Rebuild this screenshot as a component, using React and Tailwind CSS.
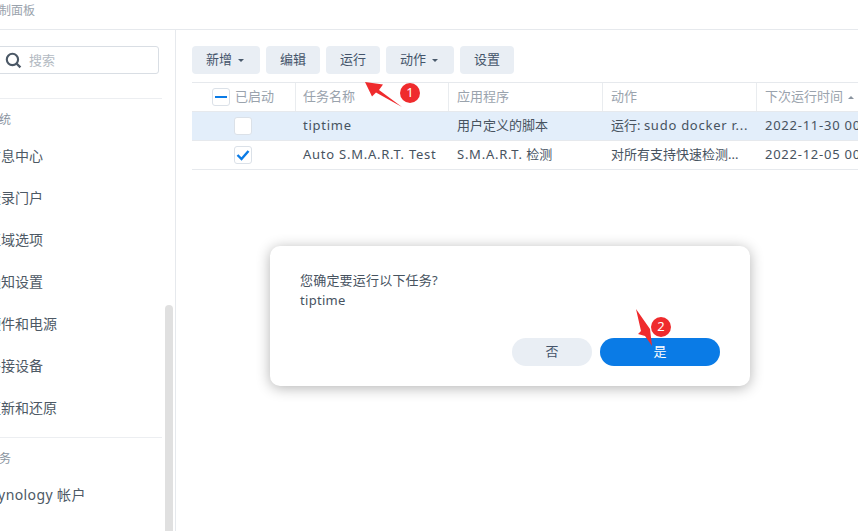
import React from "react";

function Caret() {
  return <span className="ml-[6px] inline-block h-0 w-0 border-x-[3px] border-t-[3px] border-x-transparent border-t-[#4a5a6c]" />;
}

function Btn({ w, label, caret }) {
  return (
    <div className={`${w} flex h-[28px] items-center justify-center rounded-[4px] bg-[#e9eef4] text-[13px] text-[#44546a] ${caret ? "pr-[2px]" : ""}`}>
      {label}
      {caret && <Caret />}
    </div>
  );
}

function Box({ checked, minus }) {
  return (
    <div className="flex h-[18px] w-[18px] items-center justify-center rounded-[3px] border border-[#dbe1e8] bg-white">
      {checked && (
        <svg width="14" height="12" viewBox="0 0 14 12">
          <path d="M1.5 6 L5.5 10 L12.5 2" fill="none" stroke="#0a7be6" strokeWidth="2.4" />
        </svg>
      )}
      {minus && <div className="h-[2px] w-[12px] bg-[#0a7be6]" />}
    </div>
  );
}

const NAV = ["信息中心", "登录门户", "区域选项", "通知设置", "硬件和电源", "外接设备", "更新和还原"];

function Sidebar() {
  return (
    <aside className="relative w-[176px] shrink-0 overflow-hidden border-r border-[#e6e9ed]">
      <div className="ml-[-13px] w-[176px]">
        <div className="mt-[16px] ml-[-13px] flex h-[28px] w-[185px] items-center rounded-[3px] border border-[#d9dee4] pl-[30px]">
          <svg width="17" height="17" viewBox="0 0 16 16" className="shrink-0">
            <circle cx="7" cy="7" r="5.3" fill="none" stroke="#4b5866" strokeWidth="2" />
            <path d="M10.8 10.8 L14.5 14.5" stroke="#4b5866" strokeWidth="2.2" />
          </svg>
          <span className="ml-[7px] pt-[1px] text-[13px] text-[#b3bac2]">搜索</span>
        </div>
        <div className="mt-[24px] ml-[-13px] w-[188px] border-t border-[#eceef1]" />
        <div className="mt-[12px] h-[17px] text-[12px] leading-[17px] text-[#8a949f]">系统</div>
        <div className="mt-[6px]">
          {NAV.map((t) => (
            <div key={t} className="flex h-[42px] items-center text-[14px] text-[#4d5965]">{t}</div>
          ))}
        </div>
        <div className="mt-[9px] ml-[-13px] w-[188px] border-t border-[#eceef1]" />
        <div className="mt-[12px] h-[17px] text-[12px] leading-[17px] text-[#8a949f]">服务</div>
        <div className="mt-[6px] flex h-[42px] items-center whitespace-nowrap text-[14px] tracking-[0.4px] text-[#4d5965]">
          <span className="ml-[3px]">Synology 帐户</span>
        </div>
      </div>
      <div className="absolute right-[2px] top-[275px] h-[300px] w-[8px] rounded-[4px] bg-[#e0e0e0]" />
    </aside>
  );
}

const COLS = ["w-[103px]", "w-[153px]", "w-[154px]", "w-[154px]", "w-[160px]"];

function L({ children }) {
  return <span className="tracking-[0.75px]">{children}</span>;
}

function Row({ bg, check, cells }) {
  return (
    <div className={`flex h-[29px] border-b border-[#e6e9ed] text-[13px] text-[#47535f] ${bg}`}>
      <div className={`${COLS[0]} flex shrink-0 items-center pl-[42px]`}>
        <Box checked={check} />
      </div>
      {cells.map((c, i) => (
        <div key={i} className={`${COLS[i + 1]} shrink-0 overflow-hidden whitespace-nowrap leading-[27px] ${i === 0 ? "pl-[8px]" : "pl-[9px]"}`}>{c}</div>
      ))}
    </div>
  );
}

function Table() {
  return (
    <div className="mt-[8px] w-[666px] overflow-hidden">
      <div className="flex h-[30px] border-y border-[#e6e9ed] text-[13px] text-[#9aa3ad]">
        <div className={`${COLS[0]} flex shrink-0 items-center gap-[5px] pl-[20px]`}>
          <Box minus />
          <span>已启动</span>
        </div>
        {["任务名称", "应用程序", "动作", "下次运行时间"].map((t, i) => (
          <div key={t} className={`${COLS[i + 1]} flex shrink-0 items-center whitespace-nowrap border-l border-[#e9ecef] ${i === 0 ? "pl-[7px]" : "pl-[8px]"}`}>
            {t}
            {i === 3 && <span className="ml-[5px] h-0 w-0 border-x-[3px] border-b-[3px] border-x-transparent border-b-[#8a949f]" />}
          </div>
        ))}
      </div>
      <Row
        bg="bg-[#e3eefa]"
        cells={[<L>tiptime</L>, "用户定义的脚本", <>运行: <L>sudo docker r...</L></>, <L>2022-11-30 00:00</L>]}
      />
      <Row
        bg="bg-white"
        check
        cells={[<L>Auto S.M.A.R.T. Test</L>, <><L>S.M.A.R.T.</L> 检测</>, "对所有支持快速检测...", <L>2022-12-05 00:00</L>]}
      />
    </div>
  );
}

function Dialog() {
  return (
    <div className="absolute left-[270px] top-[246px] h-[140px] w-[480px] rounded-[10px] bg-white shadow-[0_2px_14px_rgba(0,0,0,0.3)]">
      <div className="pl-[30px] pt-[24px] text-[13px] leading-[20px] text-[#47535f]">
        <div className="tracking-[0.2px]">您确定要运行以下任务?</div>
        <div className="tracking-[0.3px]">tiptime</div>
      </div>
      <div className="absolute bottom-[20px] right-[30px] flex gap-[8px]">
        <div className="flex h-[28px] w-[80px] items-center justify-center rounded-full bg-[#e9eef4] text-[13px] text-[#44546a]">否</div>
        <div className="flex h-[28px] w-[120px] items-center justify-center rounded-full bg-[#0a7be6] text-[13px] text-white">是</div>
      </div>
    </div>
  );
}

function Marks() {
  return (
    <svg className="pointer-events-none absolute left-0 top-0" width="858" height="531" viewBox="0 0 858 531">
      <polygon points="365,82 383,84.5 379,90 402,107 376,92.5 372,96.5" fill="#ef2b2d" />
      <polygon points="636,309 650,329 652,346 645,336 638,334 641,331" fill="#ef2b2d" />
    </svg>
  );
}

function Badge({ pos, n }) {
  return (
    <div className={`absolute ${pos} flex h-[20px] w-[20px] items-center justify-center rounded-full bg-[#ef2b2d] text-[13px] text-white`}>{n}</div>
  );
}

export default function App() {
  return (
    <div className="relative flex h-[531px] w-[858px] flex-col overflow-hidden bg-white" style={{ fontFamily: '"Noto Sans", "Noto Sans CJK SC", sans-serif' }}>
      <header className="flex h-[30px] shrink-0 items-center overflow-hidden border-b border-[#e6e9ed] pb-[7px] text-[12px] text-[#9aa3ad]">
        <span className="ml-[-13px] whitespace-nowrap">控制面板</span>
      </header>
      <div className="flex min-h-0 flex-1">
        <Sidebar />
        <main className="min-w-0 flex-1 pl-[16px] pt-[16px]">
          <div className="flex gap-[6px]">
            <Btn w="w-[68px]" label="新增" caret />
            <Btn w="w-[54px]" label="编辑" />
            <Btn w="w-[54px]" label="运行" />
            <Btn w="w-[68px]" label="动作" caret />
            <Btn w="w-[54px]" label="设置" />
          </div>
          <Table />
        </main>
      </div>
      <Dialog />
      <Marks />
      <Badge pos="left-[400px] top-[83px]" n="1" />
      <Badge pos="left-[651px] top-[317px]" n="2" />
    </div>
  );
}
